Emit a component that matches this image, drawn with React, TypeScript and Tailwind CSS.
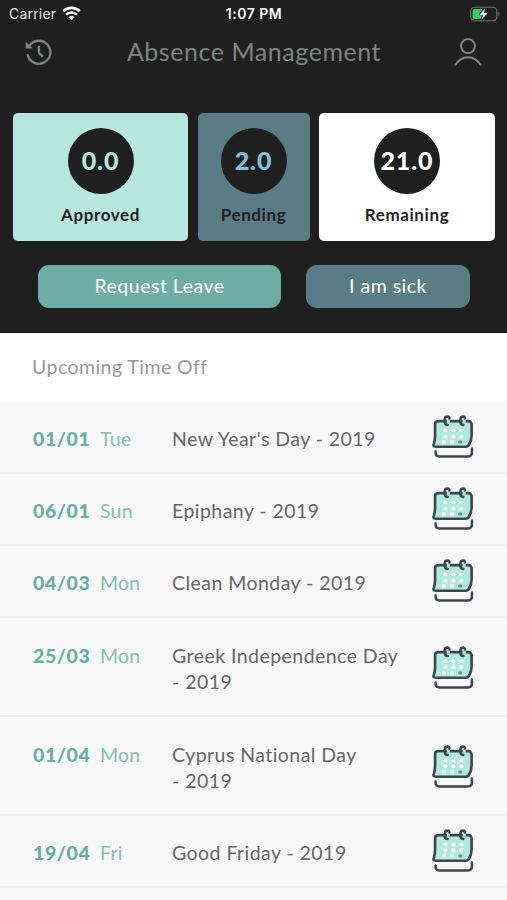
import { clsx } from "clsx";

interface Holiday {
  date: string;
  day: string;
  lines: string[];
}

interface Balance {
  value: string;
  label: string;
  card: string;
  text: string;
}

const balances: Balance[] = [
  { value: "0.0", label: "Approved", card: "w-[175px] bg-[#b8e6df]", text: "text-[#b8e6df]" },
  { value: "2.0", label: "Pending", card: "w-[112px] bg-[#5a7c84]", text: "text-[#7cc4d8]" },
  { value: "21.0", label: "Remaining", card: "w-[176px] bg-white", text: "text-white" },
];

const holidays: Holiday[] = [
  { date: "01/01", day: "Tue", lines: ["New Year's Day - 2019"] },
  { date: "06/01", day: "Sun", lines: ["Epiphany - 2019"] },
  { date: "04/03", day: "Mon", lines: ["Clean Monday - 2019"] },
  { date: "25/03", day: "Mon", lines: ["Greek Independence Day", "- 2019"] },
  { date: "01/04", day: "Mon", lines: ["Cyprus National Day", "- 2019"] },
  { date: "19/04", day: "Fri", lines: ["Good Friday - 2019"] },
];

const WifiIcon = () => (
  <svg className="w-[19px] h-[15px]" viewBox="0 0 19 15" fill="none">
    <path d="M1.2 5.2a12 12 0 0 1 16.6 0" stroke="#fff" strokeWidth="2.6" />
    <path d="M4.1 8.6a7.8 7.8 0 0 1 10.8 0" stroke="#fff" strokeWidth="2.5" />
    <path d="M9.5 14.2 6.5 11.2a4.3 4.3 0 0 1 6 0z" fill="#fff" />
  </svg>
);

const BatteryIcon = () => (
  <svg className="w-[31px] h-[16px]" viewBox="0 0 31 16" fill="none">
    <rect x="0.8" y="1.3" width="26" height="13.4" rx="3.6" stroke="#6f7371" strokeWidth="1.1" />
    <path d="M28.4 5.6c1.6.7 1.6 4.1 0 4.8z" fill="#6f7371" />
    <path d="M4.4 3h8L8.6 9h3.2l-1 4H4.4a1.8 1.8 0 0 1-1.8-1.8V4.8A1.8 1.8 0 0 1 4.4 3z" fill="#33cf5c" />
    <path d="M15 2.4 9.4 8.9h3.5l-1.4 4.8 6-6.7h-3.6z" fill="#fff" />
  </svg>
);

const HistoryIcon = () => (
  <svg className="w-[28px] h-[28px]" viewBox="0 0 28 28" fill="none" stroke="#7f8483" strokeWidth="2.3">
    <path d="M5.2 8A11.5 11.500 0 1 1 3.500 16" />
    <path d="M1.6 3.4v7.200h7.100z" fill="#7f8483" stroke="none" />
    <path d="M14.900 7.800v6.900l4 3.900" />
  </svg>
);

const UserIcon = () => (
  <svg className="w-[28px] h-[29px]" viewBox="0 0 28 29" fill="none" stroke="#868a89" strokeWidth="1.9">
    <circle cx="14" cy="8.1" r="7" />
    <path d="M1 27.500c3.400-5.600 7.700-8.200 13-8.200s9.600 2.600 13 8.200" />
  </svg>
);

const CalendarIcon = () => (
  <svg className="w-[43px] h-[45px] -mr-[1px] shrink-0" viewBox="0 0 42 44" fill="none">
    <path
      d="M6 6h29.500a3.200 3.200 0 0 1 3.200 3.200v10.500c0 4.300-1 6.900-2.700 9.600-.7 1.200-1.600 1.700-3 1.700H3.600c-2 0-2.700-1.300-1.800-2.800C2.600 25.800 3 23.600 3 20.500V9.200A3.200 3.200 0 0 1 6 6z"
      fill="#b3e8df"
      stroke="#3f474e"
      strokeWidth="2.600"
    />
    <path d="M3.500 35.600v1.100c0 2.400 1.300 3.800 3.600 3.800H35c2.500 0 4-1.400 4-3.800v-3.900" stroke="#3f474e" strokeWidth="2.500" strokeLinecap="round" />
    <path d="M14.500 4.200h3v3.400h-3zM30 4.200h3v3.400h-3z" fill="#b3e8df" />
    <g stroke="#3f474e" strokeWidth="2.500" strokeLinecap="round">
      <path d="M17 3.400c-.2-1.100-1-1.800-2-1.800-1.600 0-2.500 1.200-2.500 2.900v2c0 1.900 1 3.100 2.800 3.200" />
      <path d="M32.300 3.400c-.2-1.100-1-1.800-2-1.800-1.600 0-2.500 1.200-2.500 2.900v2c0 1.900 1 3.100 2.800 3.200" />
    </g>
    <g fill="#fff">
      <circle cx="13" cy="15" r="1.900" />
      <circle cx="21" cy="15" r="1.900" />
      <circle cx="28.700" cy="15" r="1.900" />
      <circle cx="13" cy="20.800" r="1.900" />
      <circle cx="20.800" cy="20.800" r="1.900" />
      <circle cx="28.500" cy="20.800" r="1.900" />
      <ellipse cx="11.600" cy="26.300" rx="2.100" ry="1.700" />
      <ellipse cx="19.600" cy="26.300" rx="2.100" ry="1.700" />
    </g>
    <ellipse cx="27.500" cy="26.300" rx="2.100" ry="1.700" fill="#5f9c95" />
  </svg>
);

const BalanceCard = ({ value, label, card, text }: Balance) => (
  <div className={clsx("h-[128px] rounded-[5px] pt-[15px] flex flex-col items-center", card)}>
    <div
      className={clsx(
        "w-[66px] h-[66px] rounded-full bg-[#1f1f1f] flex items-center justify-center pb-px text-[25px] font-black tracking-[0.9px]",
        text,
      )}
    >
      {value}
    </div>
    <p className="mt-[9px] text-[17px] leading-[24px] font-bold tracking-[0.6px] text-[#1f1f1f]">{label}</p>
  </div>
);

const HolidayRow = ({ date, day, lines }: Holiday) => {
  const tall = lines.length > 1;
  return (
    <li
      className={clsx(
        "flex items-start border-b-2 border-[#ebebec] px-[33px] text-[19.5px] leading-[26px]",
        tall ? "h-[99px] pt-[25px]" : "h-[72px] pt-[24px]",
      )}
    >
      <span className="w-[67px] font-black tracking-[0.6px] text-[#68aea4]">{date}</span>
      <span className="w-[72px] tracking-[0.2px] text-[#85bfb3]">{day}</span>
      <p className="flex-1 tracking-[0.45px] text-[#666]">
        {lines.map((line) => (
          <span key={line} className="block whitespace-nowrap">{line}</span>
        ))}
      </p>
      <div className={tall ? "pt-[3px]" : "-mt-[11px]"}>
        <CalendarIcon />
      </div>
    </li>
  );
};

export default function App() {
  return (
    <div className="w-[507px] h-[900px] overflow-hidden bg-[#f7f7f8] font-['Lato',sans-serif]">
      <header className="h-[333px] bg-[#1f1f1f]">
        <div className="h-[27px] grid grid-cols-3 items-center pl-[9px] pr-[6px] font-['Inter',sans-serif] text-[14px] text-white">
          <div className="flex items-center gap-[6px]">
            <span className="tracking-[0.2px] text-[#e6e6e6]">Carrier</span>
            <WifiIcon />
          </div>
          <span className="-ml-[2px] text-center font-semibold tracking-[0.5px]">1:07 PM</span>
          <div className="flex justify-end">
            <BatteryIcon />
          </div>
        </div>

        <div className="h-[50px] flex items-center justify-between pl-[24px] pr-[25px]">
          <button type="button" aria-label="History">
            <HistoryIcon />
          </button>
          <h1 className="-mt-px ml-[2px] text-[25px] tracking-[0.55px] text-[#7f8483]">Absence Management</h1>
          <button type="button" aria-label="Profile">
            <UserIcon />
          </button>
        </div>

        <div className="mt-[36px] pl-[13px] pr-[12px] flex justify-between">
          {balances.map((balance) => (
            <BalanceCard key={balance.label} {...balance} />
          ))}
        </div>

        <div className="mt-[24px] pl-[38px] flex gap-[25px] text-[19.5px] text-white tracking-[0.5px]">
          <button type="button" className="w-[243px] h-[43px] pb-[2px] rounded-[11px] bg-[#6eada6]">Request Leave</button>
          <button type="button" className="w-[164px] h-[43px] pb-[2px] rounded-[11px] bg-[#5a7c84]">I am sick</button>
        </div>
      </header>

      <h2 className="h-[69px] bg-white pl-[32px] pb-[2px] flex items-center text-[19.5px] tracking-[0.45px] text-[#959b99]">
        Upcoming Time Off
      </h2>

      <ul>
        {holidays.map((holiday) => (
          <HolidayRow key={holiday.date} {...holiday} />
        ))}
      </ul>
    </div>
  );
}
